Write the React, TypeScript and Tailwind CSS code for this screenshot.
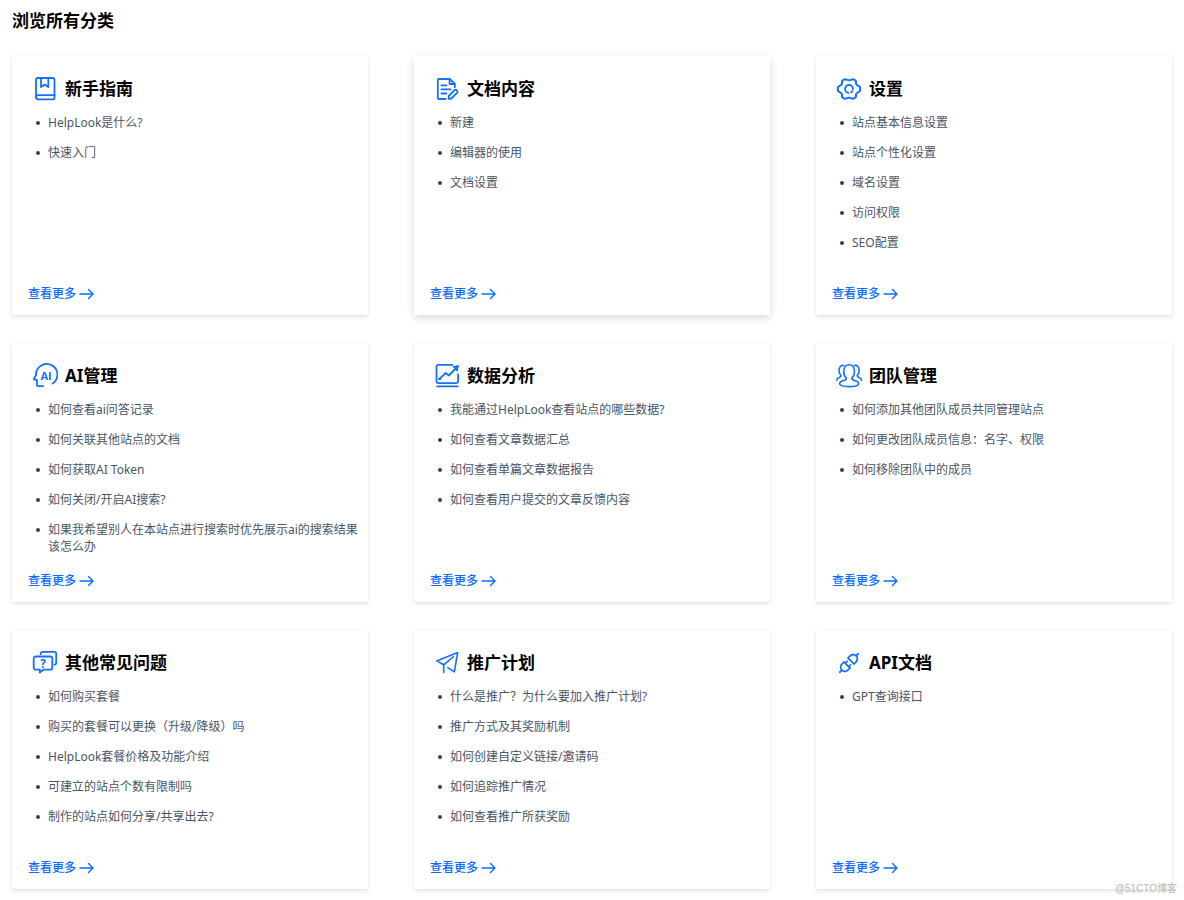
import { ReactNode } from "react";
import { AiOutlineApi } from "react-icons/ai";

interface Category {
  title: string;
  icon: ReactNode;
  items: string[];
  raised?: boolean;
}

function Icon({ children }: { children: ReactNode }) {
  return (
    <svg
      className="size-[26px] shrink-0 text-[#1470ff]"
      viewBox="0 0 26 26"
      fill="none"
      stroke="currentColor"
      strokeWidth={1.8}
      strokeLinecap="round"
      strokeLinejoin="round"
      aria-hidden="true"
    >
      {children}
    </svg>
  );
}

const BookIcon = () => (
  <Icon>
    <path d="M5.5 2h15.3a1.7 1.7 0 0 1 1.7 1.7v18a1.7 1.7 0 0 1-1.7 1.7H6.2A2.2 2.2 0 0 1 4 21.2V3.6A1.6 1.6 0 0 1 5.6 2" />
    <path d="M4 21.2a2 2 0 0 1 2.1-2h16.4" />
    <path d="M9 2v9l3.7-2.6L16.3 11V2" />
  </Icon>
);

const DocIcon = () => (
  <Icon>
    <path d="M11.5 23H4.8a1 1 0 0 1-1-1V4a1 1 0 0 1 1-1h11l5 4.8v3.4" />
    <path d="M15.6 3v5h5.2" />
    <path d="M7.5 9.3h5M7.5 13.3h9M7.5 17.5h5" />
    <path d="m14.8 20 5.6-5.8a1.5 1.5 0 0 1 2.1 0l.5.5a1.5 1.5 0 0 1 0 2.1l-5.7 5.7-2.9.4z" />
  </Icon>
);

const GearIcon = () => (
  <Icon>
    <path
      strokeWidth={2}
      d="M8.5 3.3c1.4-.6 2 .9 4.5.9s3.1-1.5 4.5-.9l2.1 1.3c.9.8-.2 2 .8 3.9.8 1.5 3.5 1.5 3.7 2.9v3.2c-.2 1.4-2.9 1.4-3.7 2.9-1 1.9.1 3.1-.8 3.9l-2.1 1.3c-1.4.6-2-.9-4.5-.9s-3.1 1.5-4.5.9l-2.1-1.300c-.9-.8.2-2-.8-3.900-.8-1.500-3.500-1.500-3.700-2.900v-3.200c.2-1.400 2.900-1.400 3.700-2.900 1-1.900-.1-3.100.8-3.900z"
    />
    <path d="M12.300 16.900A4 4 0 1 1 17 13.200M16.300 15.300a4 4 0 0 1-1.200 1.100" />
  </Icon>
);

const AiIcon = () => (
  <Icon>
    <path d="M20.6 20.6A10.7 10.7 0 1 0 4 12.2l-2 3.2c-.3.6 0 1 .6 1.100l2.400.4v5c0 .8.5 1.300 1.300 1.300h4.800" />
    <text
      x="14"
      y="16.5"
      textAnchor="middle"
      fontSize="11"
      fontWeight="700"
      fill="currentColor"
      stroke="none"
      className="font-['Open_Sans',sans-serif]"
    >
      AI
    </text>
  </Icon>
);

const ChartIcon = () => (
  <Icon>
    <path d="M18.5 1.8H4.3A1.8 1.8 0 0 0 2.5 3.6v14.7a1.8 1.8 0 0 0 1.8 1.8h18a1.8 1.8 0 0 0 1.8-1.8v-6.8" />
    <path d="M3.2 23.4h20.6" />
    <path d="m5.6 15.9 6-5.9 3.2 2.5 7-7" />
    <path d="m19.3 3.6 5.2-1-1.3 5.2z" fill="currentColor" strokeWidth={1} />
    <circle cx="5.6" cy="16" r="1" fill="currentColor" strokeWidth={1} />
  </Icon>
);

const TeamIcon = () => (
  <Icon>
    <path
      strokeWidth={1.6}
      d="M10.2 14.9C8.6 13.6 7.8 11.7 7.8 8.5c0-4 2-6.7 5.3-6.7s5.3 2.7 5.3 6.7c0 3.2-.8 5.1-2.4 6.4-.5 1.6.4 1.9 2.6 2.5 2.6.7 4 1.5 4 3.1 0 2.1-4 3.1-9.500 3.1s-9.500-1-9.500-3.100c0-1.600 1.400-2.400 4-3.100 2.200-.6 3.100-.9 2.600-2.500z"
    />
    <path
      strokeWidth={1.6}
      d="M7.7 2.5C4.8 2 3 4 3 7.4c0 2.3.7 3.7 1.900 4.900.3 1.500-.4 1.700-1.800 2.300-1.300.5-2.200 1.100-2.300 2.600M18.500 2.500C21.400 2 23.200 4 23.200 7.400c0 2.300-.7 3.700-1.900 4.900-.3 1.500.4 1.700 1.800 2.300 1.300.5 2.200 1.100 2.300 2.600"
    />
  </Icon>
);

const QuestionIcon = () => (
  <Icon>
    <path d="M3.7 6.5h14.600a2 2 0 0 1 2 2v9.200a2 2 0 0 1-2 2h-7l-3.500 2.800v-2.800H3.700a2 2 0 0 1-2-2V8.500a2 2 0 0 1 2-2z" />
    <path d="M8.6 4.200v-.3a2 2 0 0 1 2-2h11.600a2 2 0 0 1 2 2v8.800a2 2 0 0 1-1.600 2" />
    <text
      x="11.2"
      y="17.5"
      textAnchor="middle"
      fontSize="12"
      fontWeight="700"
      fill="currentColor"
      stroke="none"
      className="font-['Open_Sans',sans-serif]"
    >
      ?
    </text>
  </Icon>
);

const PlaneIcon = () => (
  <Icon>
    <path
      strokeWidth={1.6}
      d="M9.7 22.500v-7.700l-7-3.900L23.700 2.500 20.300 21.800l-6.500-4.200M9.700 14.800l9.800-8.300"
    />
  </Icon>
);

const categories: Category[] = [
  {
    title: "新手指南",
    icon: <BookIcon />,
    items: ["HelpLook是什么?", "快速入门"],
  },
  {
    title: "文档内容",
    icon: <DocIcon />,
    items: ["新建", "编辑器的使用", "文档设置"],
    raised: true,
  },
  {
    title: "设置",
    icon: <GearIcon />,
    items: ["站点基本信息设置", "站点个性化设置", "域名设置", "访问权限", "SEO配置"],
  },
  {
    title: "AI管理",
    icon: <AiIcon />,
    items: [
      "如何查看ai问答记录",
      "如何关联其他站点的文档",
      "如何获取AI Token",
      "如何关闭/开启AI搜索?",
      "如果我希望别人在本站点进行搜索时优先展示ai的搜索结果该怎么办",
    ],
  },
  {
    title: "数据分析",
    icon: <ChartIcon />,
    items: [
      "我能通过HelpLook查看站点的哪些数据?",
      "如何查看文章数据汇总",
      "如何查看单篇文章数据报告",
      "如何查看用户提交的文章反馈内容",
    ],
  },
  {
    title: "团队管理",
    icon: <TeamIcon />,
    items: [
      "如何添加其他团队成员共同管理站点",
      "如何更改团队成员信息：名字、权限",
      "如何移除团队中的成员",
    ],
  },
  {
    title: "其他常见问题",
    icon: <QuestionIcon />,
    items: [
      "如何购买套餐",
      "购买的套餐可以更换（升级/降级）吗",
      "HelpLook套餐价格及功能介绍",
      "可建立的站点个数有限制吗",
      "制作的站点如何分享/共享出去?",
    ],
  },
  {
    title: "推广计划",
    icon: <PlaneIcon />,
    items: [
      "什么是推广？为什么要加入推广计划?",
      "推广方式及其奖励机制",
      "如何创建自定义链接/邀请码",
      "如何追踪推广情况",
      "如何查看推广所获奖励",
    ],
  },
  {
    title: "API文档",
    icon: <AiOutlineApi className="size-[26px] shrink-0 text-[#1470ff]" aria-hidden="true" />,
    items: ["GPT查询接口"],
  },
];

function CategoryCard({ title, icon, items, raised = false }: Category) {
  return (
    <section
      className={`flex min-h-[259px] flex-col rounded-xs bg-white pt-5 pr-2 pb-[13px] pl-4 ${
        raised
          ? "shadow-[0_4px_8px_rgba(0,0,0,0.11),0_0_14px_rgba(0,0,0,0.04)]"
          : "shadow-[0_2px_4px_rgba(0,0,0,0.10),0_0_3px_rgba(0,0,0,0.05)]"
      }`}
    >
      <div className="flex items-center gap-[7px] pl-1">
        {icon}
        <h2 className="text-[17px] leading-[26px] font-bold text-black">{title}</h2>
      </div>
      <ul className="mt-3 flex flex-col gap-[13px] pl-2 text-[12px] leading-[17px] text-gray-600">
        {items.map((item) => (
          <li
            key={item}
            className="flex gap-2 before:mt-[7px] before:size-1 before:shrink-0 before:rounded-full before:bg-slate-700"
          >
            <a href="#">{item}</a>
          </li>
        ))}
      </ul>
      <a
        href="#"
        className="mt-auto flex items-center gap-[3px] self-start text-[12px] leading-4 font-medium text-[#0b6bff]"
      >
        查看更多
        <svg
          className="h-3 w-[15px]"
          viewBox="0 0 15 12"
          fill="none"
          stroke="currentColor"
          strokeWidth={1.4}
          strokeLinecap="round"
          strokeLinejoin="round"
          aria-hidden="true"
        >
          <path d="M1 6h13M9.500 1.500 14 6l-4.500 4.500" />
        </svg>
      </a>
    </section>
  );
}

export default function App() {
  return (
    <main
      lang="zh-CN"
      className="relative min-h-screen bg-white px-3 pt-[9px] pb-3 font-['Noto_Sans','Noto_Sans_CJK_SC',sans-serif]"
    >
      <h1 className="text-[17px] leading-6 font-bold text-black">浏览所有分类</h1>
      <div className="mt-[23px] grid grid-cols-3 gap-x-[46px] gap-y-7">
        {categories.map((category) => (
          <CategoryCard key={category.title} {...category} />
        ))}
      </div>
      <span className="absolute right-[7px] bottom-1 font-['Liberation_Sans','Noto_Sans_CJK_SC',sans-serif] text-[10px] leading-4 text-[#b8b8b8]">
        @51CTO博客
      </span>
    </main>
  );
}
